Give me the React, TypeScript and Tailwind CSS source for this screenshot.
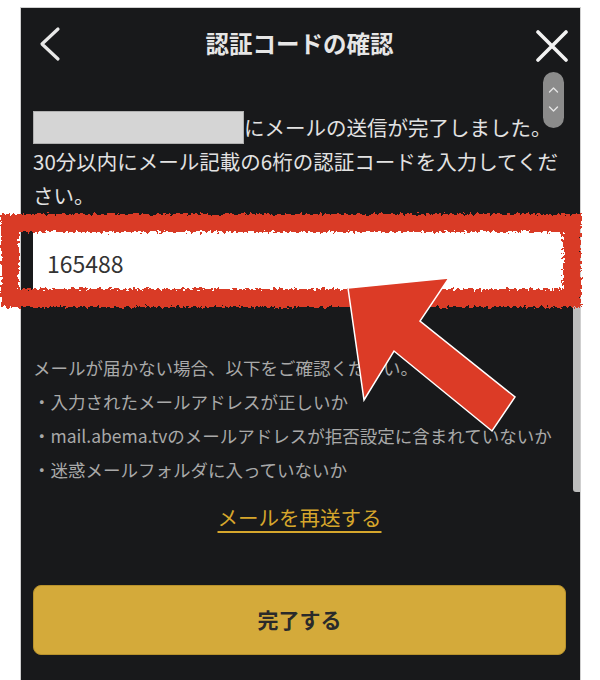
import React from "react";

const font = { fontFamily: '"Noto Sans CJK JP", "Noto Sans", sans-serif' };

export default function App() {
  return (
    <div
      className="relative w-[600px] h-[680px] bg-white overflow-hidden pt-[7px] pl-[20px]"
      style={font}
    >
      <div className="relative w-[561px] h-[673px] bg-[#18191b] border-t border-x border-[#cfcfcf] pl-[12px] pr-[14px]">
        {/* header */}
        <div className="grid grid-cols-[1fr_auto_1fr] items-center h-[72px]">
          <div className="flex">
            <svg width="24" height="36" viewBox="0 0 24 36" className="ml-[5px]">
              <path d="M20 3 L4 18 L20 33" fill="none" stroke="#e8e8e8" strokeWidth="3.2" strokeLinecap="round" strokeLinejoin="round" />
            </svg>
          </div>
          <div className="text-[23.5px] font-bold text-[#e6e6e6] leading-none">認証コードの確認</div>
          <div className="flex justify-end">
            <svg width="36" height="36" viewBox="0 0 36 36" className="-mr-[4px]">
              <path d="M4 6 L32 34 M32 6 L4 34" fill="none" stroke="#f2f2f2" strokeWidth="3.6" strokeLinecap="round" />
            </svg>
          </div>
        </div>

        {/* message */}
        <div className="mt-[30px] text-[20.5px] leading-[34px] text-[#e2e2e2]">
          <div className="flex items-center h-[34px]">
            <div className="w-[211px] h-[33px] bg-[#d5d5d5] border border-[#b0b0b0] shrink-0" />
            <span className="whitespace-nowrap">にメールの送信が完了しました。</span>
          </div>
          <p>30分以内にメール記載の6桁の認証コードを入力してください。</p>
        </div>

        {/* input */}
        <div className="mt-[18px] h-[66px] bg-white rounded-[2px] flex items-center pl-[14px] text-[23px] text-[#333333]">
          165488
        </div>

        {/* help */}
        <div className="mt-[55px] text-[17.5px] leading-[34px] text-[#a9a9a9]">
          <p>メールが届かない場合、以下をご確認ください。</p>
          <p>・入力されたメールアドレスが正しいか</p>
          <p>・mail.abema.tvのメールアドレスが拒否設定に含まれていないか</p>
          <p>・迷惑メールフォルダに入っていないか</p>
        </div>

        <div className="mt-[13px] text-center text-[20.5px] leading-[34px] text-[#d6a62c]">
          <span className="underline underline-offset-[5px] decoration-[1.5px]">メールを再送する</span>
        </div>

        <div className="mt-[51px] h-[70px] rounded-[8px] bg-[#d4aa3a] border border-[#b8922c] flex items-center justify-center text-[21px] font-bold text-[#2a2a2a]">
          完了する
        </div>

        {/* scroll pill */}
        <div className="absolute left-[522px] top-[64px] w-[21px] h-[56px] rounded-full bg-[#8b8b8b]">
          <svg width="21" height="56" viewBox="0 0 21 56">
            <path d="M6.5 20 L10.5 16 L14.5 20" fill="none" stroke="#e6e6e6" strokeWidth="1.4" strokeLinecap="round" strokeLinejoin="round" />
            <path d="M6.5 35 L10.5 39 L14.5 35" fill="none" stroke="#e6e6e6" strokeWidth="1.4" strokeLinecap="round" strokeLinejoin="round" />
          </svg>
        </div>

        {/* right scrollbar */}
        <div className="absolute right-0 top-[292px] w-[7px] h-[192px] bg-[#bdbdbd] rounded-l-[3px]" />
      </div>

      {/* annotation overlay */}
      <svg className="absolute left-0 top-0 pointer-events-none" width="600" height="680" viewBox="0 0 600 680">
        <defs>
          <filter id="rough" x="-5%" y="-30%" width="110%" height="160%">
            <feTurbulence type="fractalNoise" baseFrequency="0.3" numOctaves="2" seed="4" result="n" />
            <feDisplacementMap in="SourceGraphic" in2="n" scale="8" xChannelSelector="R" yChannelSelector="G" />
          </filter>
        </defs>
        <rect x="10" y="223" width="562" height="75" fill="none" stroke="#d93a26" strokeWidth="18" filter="url(#rough)" />
        <polygon
          points="348,288 449,278 420,321 515,397 492,431 394,351 364,400"
          fill="#dc3b26"
          stroke="#ffffff"
          strokeWidth="1.5"
          strokeLinejoin="miter"
        />
      </svg>
    </div>
  );
}
